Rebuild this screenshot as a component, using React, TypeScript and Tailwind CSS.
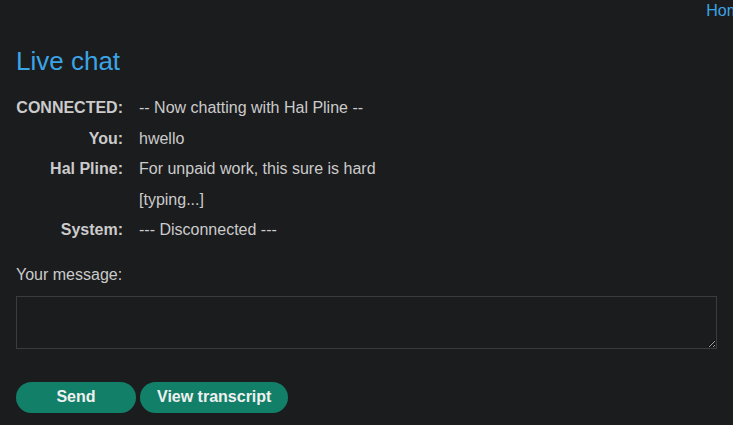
import React from "react";

const rows = [
  { who: "CONNECTED:", text: "-- Now chatting with Hal Pline --" },
  { who: "You:", text: "hwello" },
  { who: "Hal Pline:", text: "For unpaid work, this sure is hard" },
  { who: "", text: "[typing...]" },
  { who: "System:", text: "--- Disconnected ---" },
];

export default function App() {
  return (
    <div className="min-h-[425px] w-full bg-[#1b1c1e] text-[#cbcbcb] overflow-hidden font-['Liberation_Sans',Arial,sans-serif]">
      <div className="flex justify-end h-[20px]">
        <a className="text-[#3ba4e4] text-[16px] leading-[20px] mt-[1px] mr-[-16px]">
          Home
        </a>
      </div>
      <div className="px-4">
        <h1 className="text-[26px] leading-[30px] text-[#3ba4e4] mt-[26px]">
          Live chat
        </h1>
        <table className="mt-[17px] text-[16px] border-collapse">
          <tbody>
            {rows.map((r, i) => (
              <tr key={i} className="h-[30.5px]">
                <th className="text-right font-bold pr-4 align-middle whitespace-nowrap w-[123px]">{r.who}</th>
                <td className="align-middle">{r.text}</td>
              </tr>
            ))}
          </tbody>
        </table>
        <label className="block mt-[19px] text-[16px] leading-[20px]">
          Your message:
        </label>
        <textarea className="block w-full h-[53px] mt-[11px] bg-[#1b1c1e] border border-[#3c3c3e] outline-none" />
        <div className="flex gap-1 mt-[33px]">
          <button className="w-[120px] h-[31px] rounded-full bg-[#128068] text-[#f0f0f0] font-bold text-[16px]">
            Send
          </button>
          <button className="px-[17px] h-[31px] rounded-full bg-[#128068] text-[#f0f0f0] font-bold text-[16px]">
            View transcript
          </button>
        </div>
      </div>
    </div>
  );
}
